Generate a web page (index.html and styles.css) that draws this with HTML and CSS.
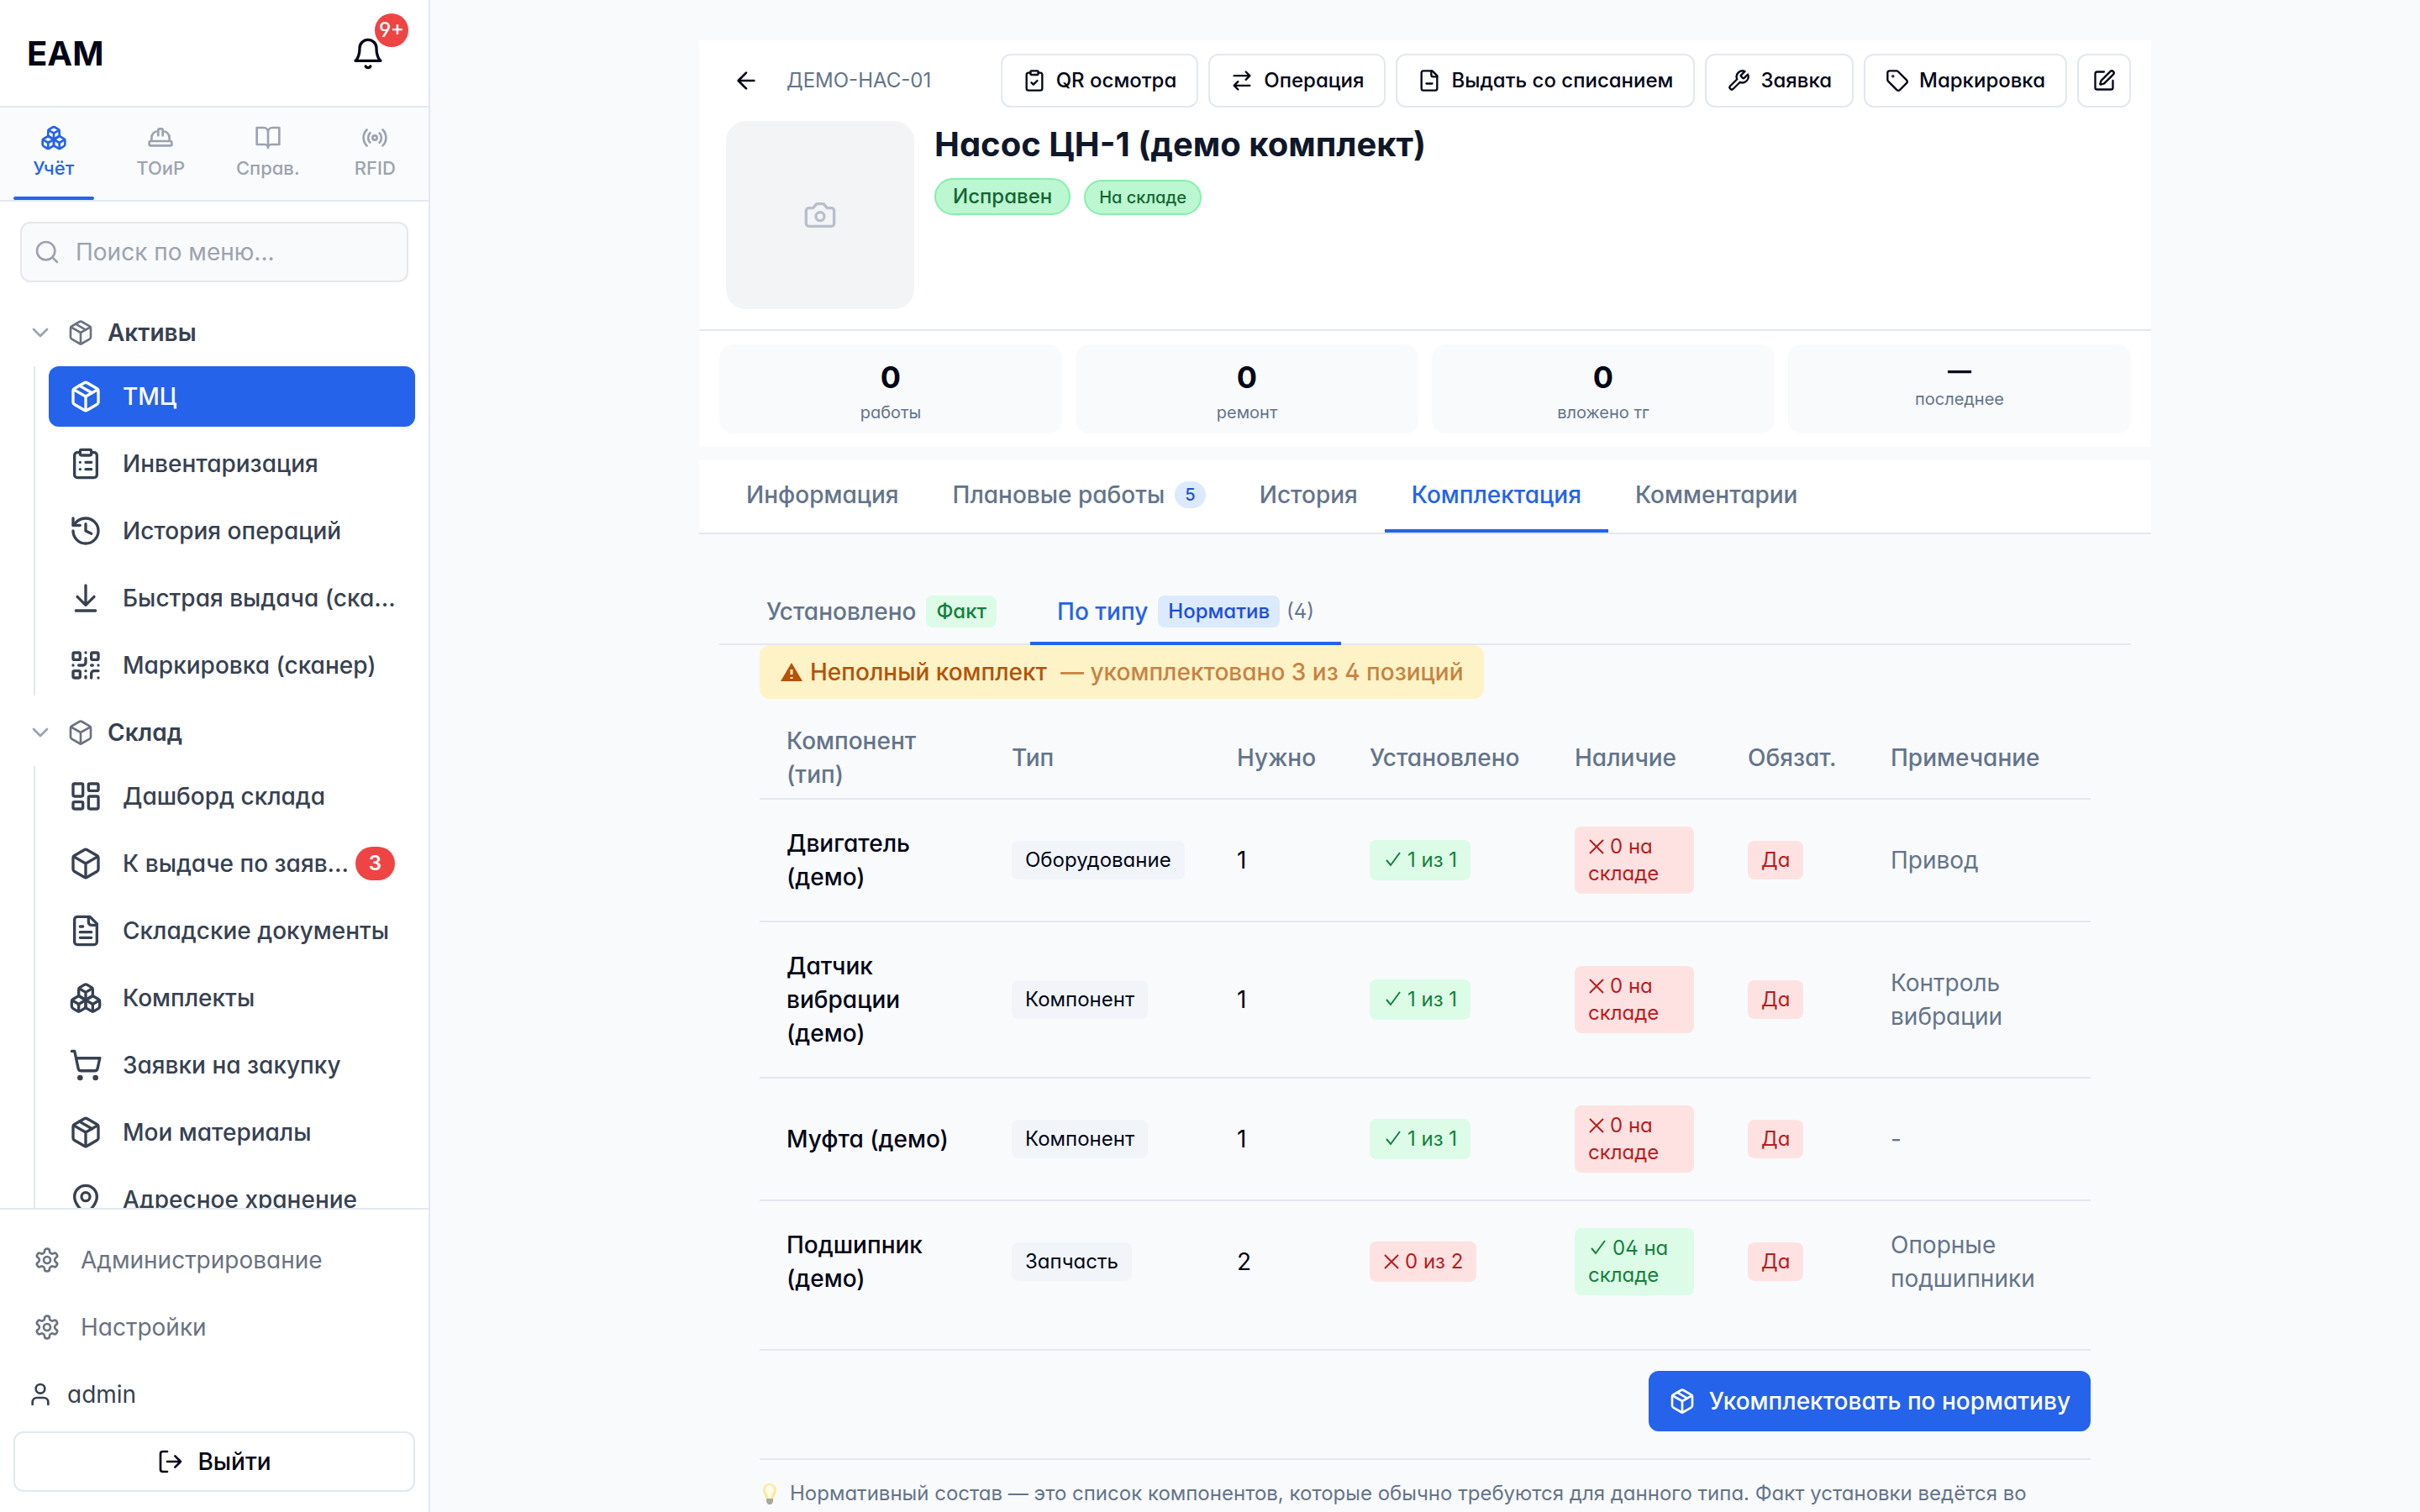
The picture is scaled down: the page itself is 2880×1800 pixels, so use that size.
FILE: index.html
```html
<!DOCTYPE html>
<html lang="ru">

<head>
    <meta charset="UTF-8">
    <meta name="viewport" content="width=device-width, initial-scale=1.0">
    <title>EAM</title>
    <link rel="stylesheet" href="styles.css">
</head>

<body>
    <!-- Icon sprite -->
    <svg class="sprite" aria-hidden="true">
        <symbol id="i-bell" viewBox="0 0 24 24">
            <path d="M6 8a6 6 0 0 1 12 0c0 7 3 9 3 9H3s3-2 3-9" />
            <path d="M10.3 21a1.94 1.94 0 0 0 3.4 0" />
        </symbol>
        <symbol id="i-boxes" viewBox="0 0 24 24">
            <path d="M2.97 12.92A2 2 0 0 0 2 14.63v3.24a2 2 0 0 0 .97 1.71l3 1.8a2 2 0 0 0 2.06 0L12 19v-5.5l-5-3-4.03 2.42Z" />
            <path d="m7 16.5-4.74-2.85M7 16.5l5-3M7 16.5v5.17" />
            <path d="M12 13.5V19l3.97 2.38a2 2 0 0 0 2.06 0l3-1.8a2 2 0 0 0 .97-1.71v-3.24a2 2 0 0 0-.97-1.71L17 10.5l-5 3Z" />
            <path d="m17 16.5-5-3M17 16.5l4.74-2.85M17 16.5v5.17" />
            <path d="M7.97 4.42A2 2 0 0 0 7 6.13v4.37l5 3 5-3V6.13a2 2 0 0 0-.97-1.71l-3-1.8a2 2 0 0 0-2.06 0l-3 1.8Z" />
            <path d="M12 8 7.26 5.15M12 8l4.74-2.85M12 13.5V8" />
        </symbol>
        <symbol id="i-helmet" viewBox="0 0 24 24">
            <path d="M2 18a1 1 0 0 0 1 1h18a1 1 0 0 0 1-1v-2a1 1 0 0 0-1-1H3a1 1 0 0 0-1 1v2z" />
            <path d="M10 10V5a1 1 0 0 1 1-1h2a1 1 0 0 1 1 1v5M4 15v-3a6 6 0 0 1 6-6M14 6a6 6 0 0 1 6 6v3" />
        </symbol>
        <symbol id="i-book" viewBox="0 0 24 24">
            <path d="M2 3h6a4 4 0 0 1 4 4v14a3 3 0 0 0-3-3H2zM22 3h-6a4 4 0 0 0-4 4v14a3 3 0 0 1 3-3h7z" />
        </symbol>
        <symbol id="i-radio" viewBox="0 0 24 24">
            <path d="M4.9 19.1C1 15.2 1 8.8 4.9 4.9M7.8 16.2c-2.3-2.3-2.3-6.1 0-8.5M16.2 7.8c2.3 2.3 2.3 6.1 0 8.5M19.1 4.9C23 8.8 23 15.1 19.1 19" />
            <circle cx="12" cy="12" r="2" />
        </symbol>
        <symbol id="i-search" viewBox="0 0 24 24">
            <circle cx="11" cy="11" r="8" />
            <path d="m21 21-4.3-4.3" />
        </symbol>
        <symbol id="i-chevron" viewBox="0 0 24 24">
            <path d="m6 9 6 6 6-6" />
        </symbol>
        <symbol id="i-box" viewBox="0 0 24 24">
            <path d="M21 8a2 2 0 0 0-1-1.73l-7-4a2 2 0 0 0-2 0l-7 4A2 2 0 0 0 3 8v8a2 2 0 0 0 1 1.73l7 4a2 2 0 0 0 2 0l7-4A2 2 0 0 0 21 16Z" />
            <path d="m3.3 7 8.7 5 8.7-5M12 22V12" />
        </symbol>
        <symbol id="i-package" viewBox="0 0 24 24">
            <path d="m7.5 4.27 9 5.15" />
            <path d="M21 8a2 2 0 0 0-1-1.73l-7-4a2 2 0 0 0-2 0l-7 4A2 2 0 0 0 3 8v8a2 2 0 0 0 1 1.73l7 4a2 2 0 0 0 2 0l7-4A2 2 0 0 0 21 16Z" />
            <path d="m3.3 7 8.7 5 8.7-5M12 22V12" />
        </symbol>
        <symbol id="i-clipboard-list" viewBox="0 0 24 24">
            <rect x="8" y="2" width="8" height="4" rx="1" />
            <path d="M16 4h2a2 2 0 0 1 2 2v14a2 2 0 0 1-2 2H6a2 2 0 0 1-2-2V6a2 2 0 0 1 2-2h2M12 11h4M12 16h4M8 11h.01M8 16h.01" />
        </symbol>
        <symbol id="i-clipboard-check" viewBox="0 0 24 24">
            <rect x="8" y="2" width="8" height="4" rx="1" />
            <path d="M16 4h2a2 2 0 0 1 2 2v14a2 2 0 0 1-2 2H6a2 2 0 0 1-2-2V6a2 2 0 0 1 2-2h2M9 14l2 2 4-4" />
        </symbol>
        <symbol id="i-history" viewBox="0 0 24 24">
            <path d="M3 12a9 9 0 1 0 9-9 9.75 9.75 0 0 0-6.74 2.74L3 8" />
            <path d="M3 3v5h5M12 7v5l4 2" />
        </symbol>
        <symbol id="i-download" viewBox="0 0 24 24">
            <path d="M12 17V3M6 11l6 6 6-6M19 21H5" />
        </symbol>
        <symbol id="i-qr" viewBox="0 0 24 24">
            <rect x="3" y="3" width="5" height="5" rx="1" />
            <rect x="16" y="3" width="5" height="5" rx="1" />
            <rect x="3" y="16" width="5" height="5" rx="1" />
            <path d="M21 16h-3a2 2 0 0 0-2 2v3M21 21v.01M12 7v3a2 2 0 0 1-2 2H7M3 12h.01M12 3h.01M12 16v.01M16 12h1M21 12v.01M12 21v-1" />
        </symbol>
        <symbol id="i-dashboard" viewBox="0 0 24 24">
            <rect x="3" y="3" width="7" height="9" rx="1" />
            <rect x="14" y="3" width="7" height="5" rx="1" />
            <rect x="14" y="12" width="7" height="9" rx="1" />
            <rect x="3" y="16" width="7" height="5" rx="1" />
        </symbol>
        <symbol id="i-file-text" viewBox="0 0 24 24">
            <path d="M15 2H6a2 2 0 0 0-2 2v16a2 2 0 0 0 2 2h12a2 2 0 0 0 2-2V7Z" />
            <path d="M14 2v4a2 2 0 0 0 2 2h4M10 9H8M16 13H8M16 17H8" />
        </symbol>
        <symbol id="i-file-minus" viewBox="0 0 24 24">
            <path d="M15 2H6a2 2 0 0 0-2 2v16a2 2 0 0 0 2 2h12a2 2 0 0 0 2-2V7Z" />
            <path d="M14 2v4a2 2 0 0 0 2 2h4M9 15h6" />
        </symbol>
        <symbol id="i-cart" viewBox="0 0 24 24">
            <circle cx="8" cy="21" r="1" />
            <circle cx="19" cy="21" r="1" />
            <path d="M2.05 2.05h2l2.66 12.42a2 2 0 0 0 2 1.58h9.78a2 2 0 0 0 1.95-1.57l1.65-7.43H5.12" />
        </symbol>
        <symbol id="i-pin" viewBox="0 0 24 24">
            <path d="M20 10c0 4.993-5.539 10.193-7.399 11.799a1 1 0 0 1-1.202 0C9.539 20.193 4 14.993 4 10a8 8 0 0 1 16 0" />
            <circle cx="12" cy="10" r="3" />
        </symbol>
        <symbol id="i-settings" viewBox="0 0 24 24">
            <path d="M12.22 2h-.44a2 2 0 0 0-2 2v.18a2 2 0 0 1-1 1.73l-.43.25a2 2 0 0 1-2 0l-.15-.08a2 2 0 0 0-2.73.73l-.22.38a2 2 0 0 0 .73 2.73l.15.1a2 2 0 0 1 1 1.72v.51a2 2 0 0 1-1 1.74l-.15.09a2 2 0 0 0-.73 2.73l.22.38a2 2 0 0 0 2.73.73l.15-.08a2 2 0 0 1 2 0l.43.25a2 2 0 0 1 1 1.73V20a2 2 0 0 0 2 2h.44a2 2 0 0 0 2-2v-.18a2 2 0 0 1 1-1.73l.43-.25a2 2 0 0 1 2 0l.15.08a2 2 0 0 0 2.73-.73l.22-.39a2 2 0 0 0-.73-2.73l-.15-.08a2 2 0 0 1-1-1.74v-.5a2 2 0 0 1 1-1.74l.15-.09a2 2 0 0 0 .73-2.73l-.22-.38a2 2 0 0 0-2.73-.73l-.15.08a2 2 0 0 1-2 0l-.43-.25a2 2 0 0 1-1-1.73V4a2 2 0 0 0-2-2z" />
            <circle cx="12" cy="12" r="3" />
        </symbol>
        <symbol id="i-user" viewBox="0 0 24 24">
            <path d="M19 21v-2a4 4 0 0 0-4-4H9a4 4 0 0 0-4 4v2" />
            <circle cx="12" cy="7" r="4" />
        </symbol>
        <symbol id="i-logout" viewBox="0 0 24 24">
            <path d="M9 21H5a2 2 0 0 1-2-2V5a2 2 0 0 1 2-2h4M16 17l5-5-5-5M21 12H9" />
        </symbol>
        <symbol id="i-back" viewBox="0 0 24 24">
            <path d="m12 19-7-7 7-7M19 12H5" />
        </symbol>
        <symbol id="i-swap" viewBox="0 0 24 24">
            <path d="m16 3 4 4-4 4M20 7H4M8 21l-4-4 4-4M4 17h16" />
        </symbol>
        <symbol id="i-wrench" viewBox="0 0 24 24">
            <path d="M14.7 6.3a1 1 0 0 0 0 1.4l1.6 1.6a1 1 0 0 0 1.4 0l3.77-3.77a6 6 0 0 1-7.94 7.94l-6.91 6.91a2.12 2.12 0 0 1-3-3l6.91-6.91a6 6 0 0 1 7.94-7.94l-3.76 3.76z" />
        </symbol>
        <symbol id="i-tag" viewBox="0 0 24 24">
            <path d="M12.586 2.586A2 2 0 0 0 11.172 2H4a2 2 0 0 0-2 2v7.172a2 2 0 0 0 .586 1.414l8.704 8.704a2.426 2.426 0 0 0 3.42 0l6.58-6.58a2.426 2.426 0 0 0 0-3.42z" />
            <circle cx="7.5" cy="7.5" r=".5" />
        </symbol>
        <symbol id="i-edit" viewBox="0 0 24 24">
            <path d="M12 3H5a2 2 0 0 0-2 2v14a2 2 0 0 0 2 2h14a2 2 0 0 0 2-2v-7" />
            <path d="M18.375 2.625a1 1 0 0 1 3 3l-9.013 9.014a2 2 0 0 1-.853.505l-2.873.84a.5.5 0 0 1-.62-.62l.84-2.873a2 2 0 0 1 .506-.852z" />
        </symbol>
        <symbol id="i-camera" viewBox="0 0 24 24">
            <path d="M14.5 4h-5L7 7H4a2 2 0 0 0-2 2v9a2 2 0 0 0 2 2h16a2 2 0 0 0 2-2V9a2 2 0 0 0-2-2h-3l-2.5-3z" />
            <circle cx="12" cy="13" r="3" />
        </symbol>
        <symbol id="i-check" viewBox="0 0 24 24">
            <path d="m4 12 5 6L20 3" />
        </symbol>
        <symbol id="i-cross" viewBox="0 0 24 24">
            <path d="m2 4 16 16M18 4 2 20" />
        </symbol>
        <symbol id="i-bulb" viewBox="0 0 24 28">
            <path fill="#fbe9a0" d="M12 2c-5 0-8 4-8 8 0 5 4 7 4 12h8c0-5 4-7 4-12 0-4-3-8-8-8z" />
            <path fill="#fffbe8" d="M12 4c-3 0-5 2.500-5 6 0 3 3 5 4 10h2c1-5 4-7 4-10 0-3.500-2-6-5-6z" />
            <path fill="#a8a8a0" d="M8 20h8v4l-2 3h-4l-2-3z" />
        </symbol>
    </svg>

    <div class="layout">
        <aside class="sidebar">
            <div class="sidebar-header">
                <span class="logo">EAM</span>
                <button class="bell" aria-label="Уведомления">
                    <svg class="icon icon-md"><use href="#i-bell" /></svg>
                    <span class="bell-count">9+</span>
                </button>
            </div>

            <div class="sections">
                <button class="section active"><svg class="icon"><use href="#i-boxes" /></svg>Учёт</button>
                <button class="section"><svg class="icon"><use href="#i-helmet" /></svg>ТОиР</button>
                <button class="section"><svg class="icon"><use href="#i-book" /></svg>Справ.</button>
                <button class="section"><svg class="icon"><use href="#i-radio" /></svg>RFID</button>
            </div>

            <nav class="menu">
                <label class="search">
                    <svg class="icon"><use href="#i-search" /></svg>
                    <input type="text" placeholder="Поиск по меню..." aria-label="Поиск по меню">
                </label>

                <div class="menu-group">
                    <button class="group-title">
                        <svg class="icon chevron"><use href="#i-chevron" /></svg>
                        <svg class="icon"><use href="#i-package" /></svg>
                        Активы
                    </button>
                    <div class="group-items">
                        <a href="#" class="item active"><svg class="icon icon-md"><use href="#i-package" /></svg><span>ТМЦ</span></a>
                        <a href="#" class="item"><svg class="icon icon-md"><use href="#i-clipboard-list" /></svg><span>Инвентаризация</span></a>
                        <a href="#" class="item"><svg class="icon icon-md"><use href="#i-history" /></svg><span>История операций</span></a>
                        <a href="#" class="item"><svg class="icon icon-md"><use href="#i-download" /></svg><span>Быстрая выдача (сканер)</span></a>
                        <a href="#" class="item"><svg class="icon icon-md"><use href="#i-qr" /></svg><span>Маркировка (сканер)</span></a>
                    </div>
                </div>

                <div class="menu-group">
                    <button class="group-title">
                        <svg class="icon chevron"><use href="#i-chevron" /></svg>
                        <svg class="icon"><use href="#i-box" /></svg>
                        Склад
                    </button>
                    <div class="group-items">
                        <a href="#" class="item"><svg class="icon icon-md"><use href="#i-dashboard" /></svg><span>Дашборд склада</span></a>
                        <a href="#" class="item"><svg class="icon icon-md"><use href="#i-box" /></svg><span>К выдаче по заявкам</span><b class="item-count">3</b></a>
                        <a href="#" class="item"><svg class="icon icon-md"><use href="#i-file-text" /></svg><span>Складские документы</span></a>
                        <a href="#" class="item"><svg class="icon icon-md"><use href="#i-boxes" /></svg><span>Комплекты</span></a>
                        <a href="#" class="item"><svg class="icon icon-md"><use href="#i-cart" /></svg><span>Заявки на закупку</span></a>
                        <a href="#" class="item"><svg class="icon icon-md"><use href="#i-package" /></svg><span>Мои материалы</span></a>
                        <a href="#" class="item"><svg class="icon icon-md"><use href="#i-pin" /></svg><span>Адресное хранение</span></a>
                    </div>
                </div>
            </nav>

            <div class="sidebar-footer">
                <a href="#" class="footer-link"><svg class="icon"><use href="#i-settings" /></svg>Администрирование</a>
                <a href="#" class="footer-link"><svg class="icon"><use href="#i-settings" /></svg>Настройки</a>
                <div class="user"><svg class="icon"><use href="#i-user" /></svg>admin</div>
                <button class="logout"><svg class="icon"><use href="#i-logout" /></svg>Выйти</button>
            </div>
        </aside>

        <main class="main">
            <div class="page">
                <section class="card">
                    <div class="toolbar">
                        <button class="back" aria-label="Назад"><svg class="icon"><use href="#i-back" /></svg></button>
                        <span class="code">ДЕМО-НАС-01</span>
                        <div class="actions">
                            <button class="action"><svg class="icon icon-sm"><use href="#i-clipboard-check" /></svg>QR осмотра</button>
                            <button class="action"><svg class="icon icon-sm"><use href="#i-swap" /></svg>Операция</button>
                            <button class="action"><svg class="icon icon-sm"><use href="#i-file-minus" /></svg>Выдать со списанием</button>
                            <button class="action"><svg class="icon icon-sm"><use href="#i-wrench" /></svg>Заявка</button>
                            <button class="action"><svg class="icon icon-sm"><use href="#i-tag" /></svg>Маркировка</button>
                            <button class="action square" aria-label="Редактировать"><svg class="icon icon-sm"><use href="#i-edit" /></svg></button>
                        </div>
                    </div>

                    <div class="asset">
                        <div class="photo"><svg class="icon icon-md"><use href="#i-camera" /></svg></div>
                        <div>
                            <h1>Насос ЦН-1 (демо комплект)</h1>
                            <div class="statuses">
                                <span class="status">Исправен</span>
                                <span class="status small">На складе</span>
                            </div>
                        </div>
                    </div>

                    <div class="stats">
                        <div class="stat"><div class="stat-value">0</div><div class="stat-label">работы</div></div>
                        <div class="stat"><div class="stat-value">0</div><div class="stat-label">ремонт</div></div>
                        <div class="stat"><div class="stat-value">0</div><div class="stat-label">вложено тг</div></div>
                        <div class="stat"><div class="stat-value empty">—</div><div class="stat-label">последнее</div></div>
                    </div>
                </section>

                <div class="tabs">
                    <button class="tab">Информация</button>
                    <button class="tab">Плановые работы <span class="tab-count">5</span></button>
                    <button class="tab">История</button>
                    <button class="tab active">Комплектация</button>
                    <button class="tab">Комментарии</button>
                </div>

                <div class="content">
                    <div class="subtabs">
                        <button class="subtab">Установлено <span class="mark green">Факт</span></button>
                        <button class="subtab active">По типу <span class="mark blue">Норматив</span> <span class="subtab-count">(4)</span></button>
                    </div>

                    <div class="kit">
                        <div class="alert">
                            <svg class="alert-icon" viewBox="0 0 28 24">
                                <path d="M14 1 27 23H1z" />
                                <path class="alert-sign" d="M14 9v6M14 18v2" />
                            </svg>
                            <strong>Неполный комплект</strong>
                            <span>— укомплектовано 3 из 4 позиций</span>
                        </div>

                        <table>
                            <colgroup>
                                <col class="col-name">
                                <col class="col-type">
                                <col class="col-need">
                                <col class="col-installed">
                                <col class="col-stock">
                                <col class="col-required">
                                <col class="col-note">
                            </colgroup>
                            <thead>
                                <tr>
                                    <th>Компонент (тип)</th>
                                    <th>Тип</th>
                                    <th>Нужно</th>
                                    <th>Установлено</th>
                                    <th>Наличие</th>
                                    <th>Обязат.</th>
                                    <th>Примечание</th>
                                </tr>
                            </thead>
                            <tbody>
                                <tr>
                                    <td class="name">Двигатель (демо)</td>
                                    <td><span class="badge">Оборудование</span></td>
                                    <td>1</td>
                                    <td><span class="badge ok installed"><svg class="glyph"><use href="#i-check" /></svg>1 из 1</span></td>
                                    <td><span class="badge bad stock"><svg class="glyph"><use href="#i-cross" /></svg>0 на складе</span></td>
                                    <td><span class="badge bad">Да</span></td>
                                    <td class="note">Привод</td>
                                </tr>
                                <tr>
                                    <td class="name">Датчик вибрации (демо)</td>
                                    <td><span class="badge">Компонент</span></td>
                                    <td>1</td>
                                    <td><span class="badge ok installed"><svg class="glyph"><use href="#i-check" /></svg>1 из 1</span></td>
                                    <td><span class="badge bad stock"><svg class="glyph"><use href="#i-cross" /></svg>0 на складе</span></td>
                                    <td><span class="badge bad">Да</span></td>
                                    <td class="note">Контроль вибрации</td>
                                </tr>
                                <tr>
                                    <td class="name">Муфта (демо)</td>
                                    <td><span class="badge">Компонент</span></td>
                                    <td>1</td>
                                    <td><span class="badge ok installed"><svg class="glyph"><use href="#i-check" /></svg>1 из 1</span></td>
                                    <td><span class="badge bad stock"><svg class="glyph"><use href="#i-cross" /></svg>0 на складе</span></td>
                                    <td><span class="badge bad">Да</span></td>
                                    <td class="note">-</td>
                                </tr>
                                <tr>
                                    <td class="name">Подшипник (демо)</td>
                                    <td><span class="badge">Запчасть</span></td>
                                    <td>2</td>
                                    <td><span class="badge bad installed"><svg class="glyph"><use href="#i-cross" /></svg>0 из 2</span></td>
                                    <td><span class="badge ok stock"><svg class="glyph"><use href="#i-check" /></svg>04 на складе</span></td>
                                    <td><span class="badge bad">Да</span></td>
                                    <td class="note">Опорные подшипники</td>
                                </tr>
                            </tbody>
                        </table>

                        <div class="kit-actions">
                            <button class="primary"><svg class="icon"><use href="#i-package" /></svg>Укомплектовать по нормативу</button>
                        </div>

                        <p class="hint"><svg class="bulb"><use href="#i-bulb" /></svg>Нормативный состав — это список компонентов, которые обычно требуются для данного типа. Факт установки ведётся во</p>
                    </div>
                </div>
            </div>
        </main>
    </div>
</body>

</html>
```
FILE: styles.css
```css
* {
    box-sizing: border-box;
}

body {
    margin: 0;
    font-family: Inter, "Liberation Sans", sans-serif;
    font-size: 28px;
    line-height: 40px;
    font-feature-settings: "cv02", "cv03", "cv04", "cv11";
    color: #020617;
    background-color: #f9fafc;
}

button,
input {
    margin: 0;
    padding: 0;
    border: none;
    background: none;
    font: inherit;
    font-feature-settings: inherit;
    color: inherit;
    cursor: pointer;
}

a {
    color: inherit;
    text-decoration: none;
}

.sprite {
    display: none;
}

.icon {
    width: 32px;
    height: 32px;
    flex-shrink: 0;
    fill: none;
    stroke: currentColor;
    stroke-width: 2;
    stroke-linecap: round;
    stroke-linejoin: round;
}

.icon-sm {
    width: 28px;
    height: 28px;
}

.icon-md {
    width: 40px;
    height: 40px;
}

.layout {
    display: flex;
    height: 100vh;
    overflow: hidden;
}

/* Sidebar */
.sidebar {
    display: flex;
    flex-direction: column;
    width: 512px;
    flex-shrink: 0;
    background-color: #fff;
    border-right: 2px solid #e2e8f0;
}

.sidebar-header {
    display: flex;
    align-items: center;
    justify-content: space-between;
    height: 128px;
    padding: 2px 32px 0;
    flex-shrink: 0;
    border-bottom: 2px solid #e2e8f0;
}

.logo {
    font-size: 40px;
    font-weight: 700;
}

.bell {
    position: relative;
    display: flex;
    padding: 20px;
}

.bell-count {
    position: absolute;
    top: -8px;
    right: -8px;
    width: 40px;
    height: 40px;
    border-radius: 20px;
    background-color: #ef4444;
    color: #fff;
    font-size: 24px;
    font-weight: 500;
    text-align: center;
}

.sections {
    display: grid;
    grid-template-columns: repeat(4, 1fr);
    height: 112px;
    flex-shrink: 0;
    background-color: #fafbfd;
    border-bottom: 2px solid #e2e8f0;
}

.section {
    position: relative;
    display: flex;
    flex-direction: column;
    align-items: center;
    gap: 4px;
    padding-top: 20px;
    font-size: 22px;
    line-height: 32px;
    font-weight: 500;
    color: #9ca3af;
}

.section.active {
    color: #2563eb;
}

.section.active::after {
    content: "";
    position: absolute;
    left: 16px;
    right: 16px;
    bottom: 0;
    height: 4px;
    border-radius: 2px;
    background-color: #2563eb;
}

.menu {
    flex: 1;
    min-height: 0;
    overflow: hidden;
    padding-top: 24px;
}

.search {
    display: flex;
    align-items: center;
    gap: 18px;
    height: 72px;
    margin: 0 24px 24px;
    padding: 0 14px;
    border: 2px solid #e5e7eb;
    border-radius: 12px;
    background-color: #f9fafb;
    color: #9ca3af;
}

.search input {
    flex: 1;
    min-width: 0;
    outline: none;
    cursor: text;
}

.search input::placeholder {
    color: #9ca3af;
    opacity: 1;
}

.menu-group {
    margin-bottom: 8px;
}

.group-title {
    display: flex;
    align-items: center;
    gap: 16px;
    width: 100%;
    height: 72px;
    margin-bottom: 4px;
    padding: 0 32px;
    font-weight: 600;
    color: #374151;
}

.group-title .icon {
    color: #6b7280;
}

.group-title .chevron {
    color: #9ca3af;
}

.group-items {
    display: flex;
    flex-direction: column;
    gap: 8px;
    margin: 0 16px 0 40px;
    padding-left: 16px;
    border-left: 2px solid #e5e7eb;
}

.item {
    display: flex;
    align-items: center;
    height: 72px;
    padding: 0 20px 0 24px;
    border-radius: 12px;
    font-weight: 500;
    color: #374151;
}

.item span {
    flex: 1;
    margin-left: 24px;
    overflow: hidden;
    text-overflow: ellipsis;
    white-space: nowrap;
}

.item.active {
    background-color: #2563eb;
    color: #fff;
}

.item-count {
    margin: 0 4px;
    padding: 4px 16px;
    border-radius: 20px;
    background-color: #ef4444;
    color: #fff;
    font-size: 24px;
    line-height: 32px;
    font-weight: 600;
}

.sidebar-footer {
    flex-shrink: 0;
    padding: 24px 16px;
    border-top: 2px solid #e2e8f0;
}

.footer-link {
    display: flex;
    align-items: center;
    gap: 24px;
    height: 72px;
    margin-bottom: 8px;
    padding: 0 24px;
    color: #6b7280;
}

.user {
    display: flex;
    align-items: center;
    gap: 16px;
    height: 72px;
    margin-bottom: 8px;
    padding: 0 16px;
    color: #374151;
}

.logout {
    display: flex;
    align-items: center;
    justify-content: center;
    gap: 16px;
    width: 100%;
    height: 72px;
    border: 2px solid #e2e8f0;
    border-radius: 12px;
    font-weight: 500;
}

/* Page */
.main {
    flex: 1;
    min-width: 0;
    overflow: hidden;
    padding: 48px;
}

.page {
    max-width: 1728px;
    margin: 0 auto;
}

.card {
    background-color: #fff;
}

.toolbar {
    display: flex;
    align-items: center;
    padding: 16px 24px;
}

.back {
    display: flex;
    align-items: center;
    justify-content: center;
    width: 64px;
    height: 64px;
}

.code {
    margin-left: 16px;
    font-size: 24px;
    color: #64748b;
}

.actions {
    display: flex;
    gap: 12px;
    margin-left: auto;
}

.action {
    display: flex;
    align-items: center;
    justify-content: center;
    gap: 12px;
    height: 64px;
    padding: 0 24px;
    border: 2px solid #e2e8f0;
    border-radius: 12px;
    font-size: 24px;
    font-weight: 500;
    white-space: nowrap;
}

.action.square {
    width: 64px;
    padding: 0;
}

.asset {
    display: flex;
    gap: 24px;
    padding: 0 32px 24px;
    border-bottom: 2px solid #e2e8f0;
}

.photo {
    display: flex;
    align-items: center;
    justify-content: center;
    width: 224px;
    height: 224px;
    border-radius: 24px;
    background-color: #f3f4f6;
    color: #b8bfcb;
}

h1 {
    margin: 0 0 12px;
    font-size: 40px;
    line-height: 56px;
    font-weight: 700;
    color: #0f172a;
}

.statuses {
    display: flex;
    align-items: flex-end;
    gap: 16px;
}

.status {
    padding: 4px 20px;
    border: 2px solid #86efac;
    border-radius: 22px;
    background-color: #bbf7d0;
    color: #166534;
    font-size: 24px;
    line-height: 32px;
    font-weight: 500;
}

.status.small {
    padding: 4px 16px;
    font-size: 20px;
    line-height: 30px;
}

.stats {
    display: grid;
    grid-template-columns: repeat(4, 1fr);
    gap: 16px;
    padding: 16px 24px;
}

.stat {
    padding: 12px 12px 10px;
    border-radius: 16px;
    background-color: #f9fafc;
    text-align: center;
}

.stat-value {
    font-size: 36px;
    line-height: 54px;
    font-weight: 700;
}

.stat-value.empty {
    font-size: 28px;
    line-height: 38px;
}

.stat-label {
    font-size: 20px;
    line-height: 30px;
    color: #64748b;
}

/* Tabs */
.tabs {
    display: flex;
    height: 88px;
    margin-top: 16px;
    padding: 0 24px;
    background-color: #fff;
    border-bottom: 2px solid #e2e8f0;
}

.tab {
    display: flex;
    align-items: center;
    gap: 12px;
    padding: 0 32px;
    border-bottom: 4px solid transparent;
    font-weight: 500;
    color: #64748b;
}

.tab.active {
    border-color: #2563eb;
    color: #2563eb;
}

.tab-count {
    padding: 0 12px;
    border-radius: 16px;
    background-color: #dbeafe;
    color: #1d4ed8;
    font-size: 20px;
    line-height: 32px;
}

.content {
    padding: 56px 24px 0;
}

.subtabs {
    display: flex;
    gap: 8px;
    padding: 0 24px;
    border-bottom: 2px solid #e2e8f0;
}

.subtab {
    display: flex;
    align-items: center;
    gap: 12px;
    margin-bottom: -2px;
    padding: 16px 32px;
    border-bottom: 4px solid transparent;
    font-weight: 500;
    color: #64748b;
}

.subtab.active {
    border-color: #2563eb;
    color: #2563eb;
}

.mark {
    padding: 3px 12px;
    border-radius: 8px;
    font-size: 24px;
    line-height: 32px;
}

.mark.green {
    background-color: #dcfce7;
    color: #15803d;
}

.mark.blue {
    background-color: #dbeafe;
    color: #1d4ed8;
}

.subtab-count {
    margin-left: -4px;
    font-size: 24px;
    font-weight: 400;
    color: #64748b;
}

.kit {
    padding: 0 48px;
}

.alert {
    display: inline-flex;
    align-items: center;
    padding: 12px 24px;
    border-radius: 12px;
    background-color: #fef3c7;
    color: #b45309;
    font-weight: 500;
}

.alert strong {
    margin: 0 16px 0 8px;
    font-weight: 500;
}

.alert span {
    opacity: 0.7;
}

.alert-icon {
    width: 28px;
    height: 24px;
    fill: #b45309;
}

.alert-sign {
    stroke: #fef3c7;
    stroke-width: 3;
}

table {
    width: 100%;
    margin: 22px 0 32px;
    table-layout: fixed;
    border-collapse: separate;
    border-spacing: 0;
}

.col-name,
.col-type {
    width: 268px;
}

.col-need {
    width: 158px;
}

.col-installed {
    width: 244px;
}

.col-stock {
    width: 206px;
}

.col-required {
    width: 170px;
}

.col-note {
    width: 270px;
}

th,
td {
    padding: 32px;
    border-bottom: 2px solid #e2e8f0;
    text-align: left;
    vertical-align: middle;
}

th {
    padding: 8px 32px;
    font-weight: 500;
    color: #64748b;
}

tbody tr:last-child td {
    border-bottom: none;
}

.name {
    font-weight: 500;
}

.note {
    color: #64748b;
}

.badge {
    display: inline-block;
    padding: 7px 16px;
    border-radius: 8px;
    background-color: #f1f5f9;
    font-size: 24px;
    line-height: 32px;
    vertical-align: middle;
}

.badge.ok {
    background-color: #dcfce7;
    color: #15803d;
}

.badge.bad {
    background-color: #fee2e2;
    color: #b91c1c;
}

.badge.installed {
    padding: 8px 16px;
}

.badge.stock {
    display: block;
    padding: 8px 16px;
}

.glyph {
    width: 24px;
    height: 24px;
    margin-right: 2px;
    vertical-align: -4px;
    fill: none;
    stroke: currentColor;
    stroke-width: 2;
}

.ok .glyph {
    margin-right: 5px;
}

.kit-actions {
    display: flex;
    justify-content: flex-end;
    padding: 24px 0 32px;
    border-top: 2px solid #e2e8f0;
    border-bottom: 2px solid #e2e8f0;
}

.primary {
    display: flex;
    align-items: center;
    gap: 16px;
    height: 72px;
    padding: 0 24px;
    border-radius: 12px;
    background-color: #2563eb;
    color: #fff;
    font-weight: 500;
}

.hint {
    margin: 24px 0 0;
    font-size: 24px;
    line-height: 32px;
    color: #64748b;
}

.bulb {
    width: 24px;
    height: 28px;
    margin-right: 12px;
    vertical-align: -6px;
}
```
